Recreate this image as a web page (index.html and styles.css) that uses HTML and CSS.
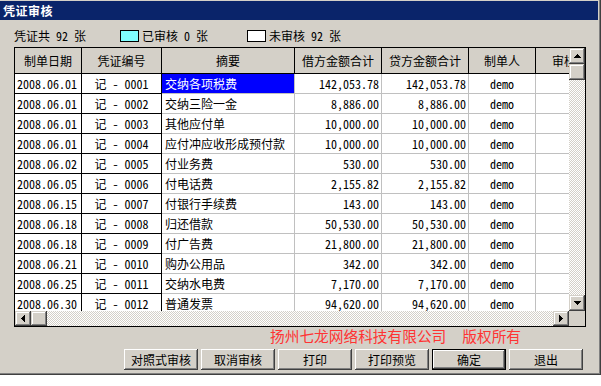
FILE: index.html
```html
<!DOCTYPE html>
<html lang="zh-CN">
<head>
<meta charset="utf-8">
<title>凭证审核</title>
<link rel="stylesheet" href="styles.css">
</head>
<body>
<div class="window">
  <div class="titlebar">凭证审核</div>
  <div class="info">
    <span class="total">凭证共 92 张</span>
    <span class="legend first"><i class="swatch cyan"></i>已审核 0 张</span>
    <span class="legend"><i class="swatch white"></i>未审核 92 张</span>
  </div>
  <div class="grid">
    <div class="cells">
      <div class="row head">
        <div class="c">制单日期</div><div class="c">凭证编号</div><div class="c">摘要</div><div class="c">借方金额合计</div><div class="c">贷方金额合计</div><div class="c">制单人</div><div class="c">审核</div>
      </div>
      <div class="row"><div class="c k date">2008.06.01</div><div class="c k no">记 - 0001</div><div class="c txt sel">交纳各项税费</div><div class="c num">142,053.78</div><div class="c num">142,053.78</div><div class="c who">demo</div><div class="c"></div></div>
      <div class="row"><div class="c k date">2008.06.01</div><div class="c k no">记 - 0002</div><div class="c txt">交纳三险一金</div><div class="c num">8,886.00</div><div class="c num">8,886.00</div><div class="c who">demo</div><div class="c"></div></div>
      <div class="row"><div class="c k date">2008.06.01</div><div class="c k no">记 - 0003</div><div class="c txt">其他应付单</div><div class="c num">10,000.00</div><div class="c num">10,000.00</div><div class="c who">demo</div><div class="c"></div></div>
      <div class="row"><div class="c k date">2008.06.01</div><div class="c k no">记 - 0004</div><div class="c txt">应付冲应收形成预付款</div><div class="c num">10,000.00</div><div class="c num">10,000.00</div><div class="c who">demo</div><div class="c"></div></div>
      <div class="row"><div class="c k date">2008.06.02</div><div class="c k no">记 - 0005</div><div class="c txt">付业务费</div><div class="c num">530.00</div><div class="c num">530.00</div><div class="c who">demo</div><div class="c"></div></div>
      <div class="row"><div class="c k date">2008.06.05</div><div class="c k no">记 - 0006</div><div class="c txt">付电话费</div><div class="c num">2,155.82</div><div class="c num">2,155.82</div><div class="c who">demo</div><div class="c"></div></div>
      <div class="row"><div class="c k date">2008.06.15</div><div class="c k no">记 - 0007</div><div class="c txt">付银行手续费</div><div class="c num">143.00</div><div class="c num">143.00</div><div class="c who">demo</div><div class="c"></div></div>
      <div class="row"><div class="c k date">2008.06.18</div><div class="c k no">记 - 0008</div><div class="c txt">归还借款</div><div class="c num">50,530.00</div><div class="c num">50,530.00</div><div class="c who">demo</div><div class="c"></div></div>
      <div class="row"><div class="c k date">2008.06.18</div><div class="c k no">记 - 0009</div><div class="c txt">付广告费</div><div class="c num">21,800.00</div><div class="c num">21,800.00</div><div class="c who">demo</div><div class="c"></div></div>
      <div class="row"><div class="c k date">2008.06.21</div><div class="c k no">记 - 0010</div><div class="c txt">购办公用品</div><div class="c num">342.00</div><div class="c num">342.00</div><div class="c who">demo</div><div class="c"></div></div>
      <div class="row"><div class="c k date">2008.06.25</div><div class="c k no">记 - 0011</div><div class="c txt">交纳水电费</div><div class="c num">7,170.00</div><div class="c num">7,170.00</div><div class="c who">demo</div><div class="c"></div></div>
      <div class="row"><div class="c k date">2008.06.30</div><div class="c k no">记 - 0012</div><div class="c txt">普通发票</div><div class="c num">94,620.00</div><div class="c num">94,620.00</div><div class="c who">demo</div><div class="c"></div></div>
    </div>
    <div class="vscroll">
      <div class="sb v"><svg width="7" height="4" viewBox="0 0 7 4" shape-rendering="crispEdges"><path d="M3 0h1v1h1v1h1v1h1v1H0V3h1V2h1V1h1z"/></svg></div>
      <div class="sb v"></div>
      <div class="track"></div>
      <div class="sb v"><svg width="7" height="4" viewBox="0 0 7 4" shape-rendering="crispEdges"><path d="M0 0h7v1H6v1H5v1H4v1H3V3H2V2H1V1H0z"/></svg></div>
    </div>
    <div class="hscroll">
      <div class="sb h"><svg width="4" height="7" viewBox="0 0 4 7" shape-rendering="crispEdges"><path d="M0 3h1V2h1V1h1V0h1v7H3V6H2V5H1V4H0z"/></svg></div>
      <div class="sb h"></div>
      <div class="track"></div>
      <div class="sb h"><svg width="4" height="7" viewBox="0 0 4 7" shape-rendering="crispEdges"><path d="M0 0h1v1h1v1h1v1h1v1H3v1H2v1H1v1H0z"/></svg></div>
    </div>
    <div class="corner"></div>
  </div>
  <div class="copyright">扬州七龙网络科技有限公司<span class="rights">版权所有</span></div>
  <div class="buttons">
    <button class="btn">对照式审核</button>
    <button class="btn">取消审核</button>
    <button class="btn">打印</button>
    <button class="btn">打印预览</button>
    <button class="btn default">确定</button>
    <button class="btn">退出</button>
  </div>
</div>
</body>
</html>
```
FILE: styles.css
```css
* {
  box-sizing: border-box;
  margin: 0;
  padding: 0;
}

body {
  background: #ffffff;
  width: 601px;
  height: 386px;
  overflow: hidden;
  font-family: "Noto Sans Mono CJK SC", "Noto Sans CJK SC", monospace;
  font-size: 12px;
  color: #000;
}

.window {
  width: 601px;
  height: 375px;
  background: #d4d0c8;
  padding: 1px 2px 0 0;
  border-right: 1px solid #404040;
  border-bottom: 1px solid #404040;
  box-shadow: inset -1px -1px 0 #808080;
  display: flex;
  flex-direction: column;
}

.titlebar {
  height: 19px;
  flex: none;
  background: #0a246a;
  color: #fff;
  font-family: "Noto Sans CJK SC", sans-serif;
  font-weight: bold;
  font-size: 12px;
  line-height: 19px;
  padding-left: 3px;
  letter-spacing: 0.5px;
}

.info {
  height: 20px;
  flex: none;
  margin-top: 6px;
  padding-left: 14px;
  display: flex;
  align-items: center;
  line-height: 20px;
}

.total {
  width: 106px;
}

.legend {
  display: flex;
  align-items: center;
  gap: 3px;
}

.legend.first {
  width: 127px;
}

.swatch {
  display: block;
  width: 19px;
  height: 12px;
  border: 1px solid #000;
}

.swatch.cyan {
  background: #80ffff;
}

.swatch.white {
  background: #fff;
}

.grid {
  flex: none;
  margin-top: 1px;
  margin-left: 14px;
  width: 572px;
  height: 280px;
  border: 1px solid #000;
  display: grid;
  grid-template-columns: 554px 16px;
  grid-template-rows: 263px 15px;
}

.cells {
  grid-column: 1;
  grid-row: 1;
  overflow: hidden;
  background: #fff;
}

.row {
  display: grid;
  grid-template-columns: 67px 80px 133px 87px 87px 67px 57px;
  width: 578px;
}

.c {
  height: 20px;
  line-height: 19px;
  border-right: 1px solid #c0c0c0;
  border-bottom: 1px solid #c0c0c0;
  white-space: nowrap;
  overflow: hidden;
}

.c.k {
  border-color: #000;
}

.head .c {
  height: 26px;
  line-height: 25px;
  background: #d4d0c8;
  border-color: #000;
  text-align: center;
}

.date {
  padding-left: 2px;
}

.no {
  text-align: center;
}

.txt {
  padding-left: 3px;
}

.sel {
  background: #0000ff;
  color: #fff;
}

.num {
  text-align: right;
  padding-right: 2px;
}

.who {
  text-align: center;
}

.vscroll {
  grid-column: 2;
  grid-row: 1;
  display: flex;
  flex-direction: column;
}

.hscroll {
  grid-column: 1;
  grid-row: 2;
  display: flex;
}

.track {
  flex: 1;
  background: repeating-conic-gradient(#ffffff 0 25%, #d4d0c8 0 50%) 0 0 / 2px 2px;
}

.sb {
  flex: none;
  background: #d4d0c8;
  box-shadow: inset -1px -1px 0 #404040, inset 1px 1px 0 #d4d0c8, inset -2px -2px 0 #808080, inset 2px 2px 0 #ffffff;
  display: flex;
  align-items: center;
  justify-content: center;
}

.sb svg {
  display: block;
}

.sb.v {
  width: 16px;
  height: 16px;
}

.sb.h {
  width: 16px;
  height: 15px;
}

.corner {
  grid-column: 2;
  grid-row: 2;
  background: #d4d0c8;
}

.copyright {
  flex: none;
  height: 18px;
  line-height: 18px;
  padding-left: 270px;
  color: #ff3333;
  font-family: "Noto Sans CJK SC", sans-serif;
  font-size: 14.7px;
  white-space: nowrap;
}

.rights {
  margin-left: 16px;
}

.buttons {
  flex: none;
  margin-top: 4px;
  display: flex;
  justify-content: flex-end;
  gap: 3px;
  padding-right: 15px;
}

.btn {
  width: 74px;
  height: 21px;
  border: none;
  background: #d4d0c8;
  box-shadow: inset -1px -1px 0 #404040, inset 1px 1px 0 #ffffff, inset -2px -2px 0 #808080, inset 2px 2px 0 #d4d0c8;
  font-family: "Noto Sans CJK SC", sans-serif;
  font-size: 12px;
  line-height: 19px;
  color: #000;
}

.btn.default {
  border: 1px solid #000;
}
```
